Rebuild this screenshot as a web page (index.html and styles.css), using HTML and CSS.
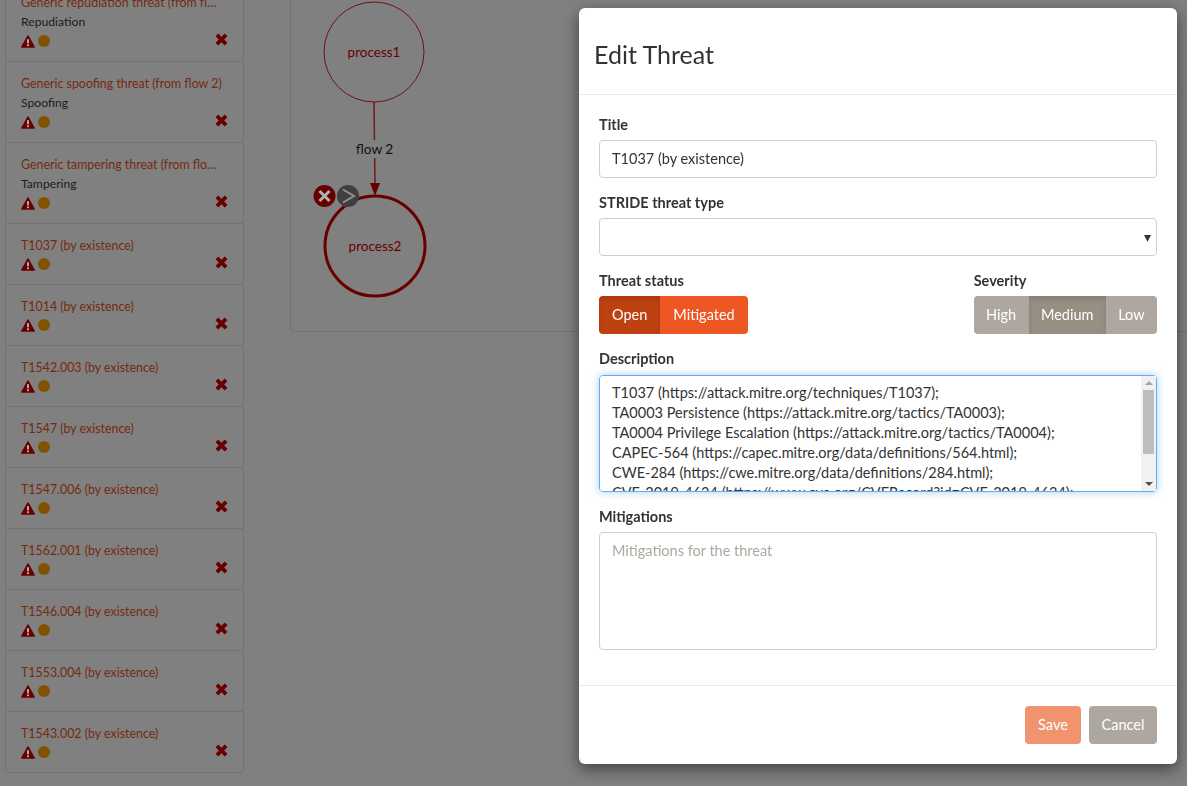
FILE: index.html
```html
<!DOCTYPE html>
<html lang="en">
<head>
<meta charset="utf-8">
<title>Edit Threat</title>
<link rel="stylesheet" href="styles.css">
</head>
<body>
<svg class="sprites" aria-hidden="true">
  <symbol id="i-warn" viewBox="0 0 16 14" preserveAspectRatio="none"><path class="warn-shape" d="M8 1 15.200 13H.8Z"/><rect class="mark" x="7" y="4.500" width="2" height="4.500"/><rect class="mark" x="7" y="10" width="2" height="2"/></symbol>
  <symbol id="i-del" viewBox="0 0 12 12"><path d="M3 .5 6 3.500 9 .5 11.500 3 8.500 6 11.500 9 9 11.500 6 8.500 3 11.500 .5 9 3.500 6 .5 3Z"/></symbol>
</svg>
<div class="page">
  <aside class="threats">
    <div class="threat"><div class="threat-title">Generic repudiation threat (from flow 2)</div><div class="threat-type">Repudiation</div><div class="threat-icons"><svg class="warn"><use href="#i-warn"/></svg><span class="dot"></span><svg class="del"><use href="#i-del"/></svg></div></div>
    <div class="threat"><div class="threat-title">Generic spoofing threat (from flow 2)</div><div class="threat-type">Spoofing</div><div class="threat-icons"><svg class="warn"><use href="#i-warn"/></svg><span class="dot"></span><svg class="del"><use href="#i-del"/></svg></div></div>
    <div class="threat"><div class="threat-title">Generic tampering threat (from flow 2)</div><div class="threat-type">Tampering</div><div class="threat-icons"><svg class="warn"><use href="#i-warn"/></svg><span class="dot"></span><svg class="del"><use href="#i-del"/></svg></div></div>
    <div class="threat"><div class="threat-title">T1037 (by existence)</div><div class="threat-icons"><svg class="warn"><use href="#i-warn"/></svg><span class="dot"></span><svg class="del"><use href="#i-del"/></svg></div></div>
    <div class="threat"><div class="threat-title">T1014 (by existence)</div><div class="threat-icons"><svg class="warn"><use href="#i-warn"/></svg><span class="dot"></span><svg class="del"><use href="#i-del"/></svg></div></div>
    <div class="threat"><div class="threat-title">T1542.003 (by existence)</div><div class="threat-icons"><svg class="warn"><use href="#i-warn"/></svg><span class="dot"></span><svg class="del"><use href="#i-del"/></svg></div></div>
    <div class="threat"><div class="threat-title">T1547 (by existence)</div><div class="threat-icons"><svg class="warn"><use href="#i-warn"/></svg><span class="dot"></span><svg class="del"><use href="#i-del"/></svg></div></div>
    <div class="threat"><div class="threat-title">T1547.006 (by existence)</div><div class="threat-icons"><svg class="warn"><use href="#i-warn"/></svg><span class="dot"></span><svg class="del"><use href="#i-del"/></svg></div></div>
    <div class="threat"><div class="threat-title">T1562.001 (by existence)</div><div class="threat-icons"><svg class="warn"><use href="#i-warn"/></svg><span class="dot"></span><svg class="del"><use href="#i-del"/></svg></div></div>
    <div class="threat"><div class="threat-title">T1546.004 (by existence)</div><div class="threat-icons"><svg class="warn"><use href="#i-warn"/></svg><span class="dot"></span><svg class="del"><use href="#i-del"/></svg></div></div>
    <div class="threat"><div class="threat-title">T1553.004 (by existence)</div><div class="threat-icons"><svg class="warn"><use href="#i-warn"/></svg><span class="dot"></span><svg class="del"><use href="#i-del"/></svg></div></div>
    <div class="threat"><div class="threat-title">T1543.002 (by existence)</div><div class="threat-icons"><svg class="warn"><use href="#i-warn"/></svg><span class="dot"></span><svg class="del"><use href="#i-del"/></svg></div></div>
  </aside>
  <section class="canvas">
    <svg class="diagram" viewBox="0 0 300 332" width="300" height="332">
      <circle class="node" cx="84" cy="52" r="50"/>
      <text class="node-label" x="84" y="57">process1</text>
      <path class="flow" d="M84 102 85 186"/>
      <path class="arrow" d="M85 196 80 183H90Z"/>
      <rect class="flow-bg" x="62" y="140" width="46" height="18"/>
      <text class="flow-label" x="84.500" y="154">flow 2</text>
      <circle class="node selected" cx="85" cy="246" r="50"/>
      <text class="node-label" x="85" y="251">process2</text>
      <circle class="tool-del" cx="34.500" cy="196" r="11"/>
      <path class="tool-x" d="M29.500 191 39.500 201M39.500 191 29.500 201"/>
      <circle class="tool-next" cx="58" cy="196" r="11"/>
      <path class="tool-chev" d="M53 189.500 64 196 53 202.500"/>
    </svg>
  </section>
</div>
<div class="modal">
  <header class="modal-head"><h2 class="modal-title">Edit Threat</h2></header>
  <form class="modal-body">
    <div class="field">
      <label class="label" for="title">Title</label>
      <input class="control" id="title" type="text" value="T1037 (by existence)">
    </div>
    <div class="field">
      <div class="label">STRIDE threat type</div>
      <div class="select"><span class="caret">▾</span></div>
    </div>
    <div class="field split">
      <div>
        <div class="label">Threat status</div>
        <div class="btn-group"><button type="button" class="btn orange on">Open</button><button type="button" class="btn orange">Mitigated</button></div>
      </div>
      <div>
        <div class="label">Severity</div>
        <div class="btn-group"><button type="button" class="btn grey">High</button><button type="button" class="btn grey on">Medium</button><button type="button" class="btn grey">Low</button></div>
      </div>
    </div>
    <div class="field">
      <label class="label" for="desc">Description</label>
      <div class="area-wrap">
        <textarea class="control area focus" id="desc">T1037 (https://attack.mitre.org/techniques/T1037);
TA0003 Persistence (https://attack.mitre.org/tactics/TA0003);
TA0004 Privilege Escalation (https://attack.mitre.org/tactics/TA0004);
CAPEC-564 (https://capec.mitre.org/data/definitions/564.html);
CWE-284 (https://cwe.mitre.org/data/definitions/284.html);
CVE-2019-4634 (https://www.cve.org/CVERecord?id=CVE-2019-4634);
Boot or Logon Initialization Scripts</textarea>
        <div class="scrollbar" aria-hidden="true">
          <span class="sb-up"></span>
          <span class="sb-thumb"></span>
          <span class="sb-down"></span>
        </div>
      </div>
    </div>
    <div class="field">
      <label class="label" for="mit">Mitigations</label>
      <textarea class="control area tall" id="mit" placeholder="Mitigations for the threat"></textarea>
    </div>
  </form>
  <footer class="modal-foot"><button type="button" class="btn save">Save</button><button type="button" class="btn grey">Cancel</button></footer>
</div>
</body>
</html>
```

FILE: styles.css
```css
* { box-sizing: border-box; }
html, body { height: 100%; }
body {
  margin: 0;
  overflow: hidden;
  background: #808080;
  color: #333;
  font-family: "Lato", "Noto Sans", sans-serif;
  font-size: 14.5px;
  line-height: 21px;
}
.sprites { display: none; }
.page {
  display: flex;
  align-items: flex-start;
  gap: 46px;
  padding-left: 5px;
  margin-top: -20px;
  overflow: hidden;
  height: 806px;
}
.threats {
  width: 239px;
  flex: none;
  border: 1px solid #737373;
  border-radius: 4px;
}
.threat {
  padding: 12px 15px 10px;
  border-bottom: 1px solid #737373;
}
.threat:last-child { border-bottom: 0; }
.threat-title {
  color: #752a10;
  font-size: 12.4px;
  line-height: 16px;
  padding-top: 2px;
  width: 201px;
  white-space: nowrap;
  overflow: hidden;
  text-overflow: ellipsis;
}
.threat-type {
  color: #1c1c1c;
  font-size: 12.2px;
  line-height: 18px;
  margin-top: 2px;
}
.threat-icons {
  display: flex;
  align-items: center;
  height: 20px;
}
.warn { width: 14px; height: 13px; flex: none; }
.warn-shape { fill: #680000; stroke: #680000; stroke-width: 1.500; stroke-linejoin: round; }
.mark { fill: #c0c0c0; }
.dot {
  width: 12px;
  height: 12px;
  margin-left: 3px;
  border-radius: 50%;
  background: #7f5302;
}
.del { width: 13px; height: 13px; margin-left: auto; margin-top: -3px; fill: #680000; }
.canvas {
  width: 1000px;
  height: 352px;
  border: 1px solid #737373;
  border-radius: 4px;
  flex: none;
  padding-top: 19px;
}
.diagram { display: block; margin-left: -1px; }
.node { fill: none; stroke: #701010; stroke-width: 1; }
.node.selected { stroke: #680000; stroke-width: 3; }
.node-label { fill: #680000; font-size: 13.5px; text-anchor: middle; }
.flow { stroke: #701a1a; stroke-width: 1.500; fill: none; }
.arrow { fill: #680000; }
.flow-bg { fill: #808080; }
.flow-label { fill: #111; font-size: 13.7px; text-anchor: middle; }
.tool-del { fill: #680000; }
.tool-x { stroke: #b0b0b0; stroke-width: 3; fill: none; }
.tool-next { fill: #3f3f3f; }
.tool-chev { stroke: #929292; stroke-width: 2; fill: none; }
.modal {
  position: fixed;
  left: 579px;
  top: 8px;
  width: 598px;
  height: 756px;
  background: #fff;
  border-radius: 6px;
  box-shadow: 0 5px 15px rgba(0, 0, 0, .5);
  display: flex;
  flex-direction: column;
}
.modal-head {
  height: 87px;
  padding: 0 15px;
  display: flex;
  align-items: center;
  border-bottom: 1px solid #e9e9e9;
  flex: none;
}
.modal-title { margin: 0; font-weight: 400; font-size: 25px; color: #333; padding-top: 7px; }
.modal-body { padding: 20px 20px 0; flex: 1; }
.field { margin-bottom: 15px; }
.label { display: block; font-weight: 700; margin-bottom: 6px; line-height: 19px; }
.control {
  display: block;
  width: 100%;
  height: 38px;
  padding: 5px 12px 7px;
  border: 1px solid #cfcfcf;
  border-radius: 4px;
  font: inherit;
  color: #333;
  background: #fff;
  outline: none;
}
.select {
  position: relative;
  height: 38px;
  border: 1px solid #cfcfcf;
  border-radius: 4px;
}
.caret { position: absolute; right: 5px; top: 7px; font-size: 14px; color: #333; }
.split { display: flex; justify-content: space-between; }
.btn-group { display: flex; }
.btn {
  height: 38px;
  padding: 0 12.400px 2px;
  border: 0;
  font: inherit;
  color: #fff;
  cursor: pointer;
}
.btn-group .orange { padding: 0 13px 2px; }
.btn-group .btn:first-child { border-radius: 4px 0 0 4px; }
.btn-group .btn:last-child { border-radius: 0 4px 4px 0; }
.orange { background: #ee5722; }
.orange.on { background: #be4112; box-shadow: inset 0 3px 5px rgba(0, 0, 0, .125); }
.grey { background: #aea79f; }
.grey.on { background: #978f84; box-shadow: inset 0 3px 5px rgba(0, 0, 0, .125); }
.area-wrap { position: relative; margin-top: 7px; }
.area { resize: none; line-height: 20px; padding: 8px 12px; height: 117px; }
.area.focus {
  padding-top: 7px;
  border-color: #62aef2;
  box-shadow: 0 0 8px rgba(102, 175, 233, .6);
}
.scrollbar {
  position: absolute;
  top: 1px;
  right: 1px;
  bottom: 1px;
  width: 15px;
  background: #f1f1f1;
  display: flex;
  flex-direction: column;
  align-items: center;
}
.sb-up {
  margin-top: 5px;
  border: 4px solid transparent;
  border-top: 0;
  border-bottom: 4px solid #a3a3a3;
}
.sb-thumb {
  width: 11px;
  height: 64px;
  margin-top: 5px;
  background: #bdbdbd;
}
.sb-down {
  margin-top: auto;
  margin-bottom: 5px;
  border: 4px solid transparent;
  border-bottom: 0;
  border-top: 4px solid #505050;
}
.area.tall { height: 118px; }
.area::placeholder { color: #aea79f; opacity: 1; }
.modal-foot {
  height: 79px;
  border-top: 1px solid #e9e9e9;
  display: flex;
  justify-content: flex-end;
  align-items: flex-start;
  gap: 8px;
  padding: 20px 20px 0;
  flex: none;
}
.save { background: #f2936f; width: 56px; padding: 0 0 2px; border-radius: 4px; }
.modal-foot .grey { width: 68px; padding: 0 0 2px; border-radius: 4px; }
```
